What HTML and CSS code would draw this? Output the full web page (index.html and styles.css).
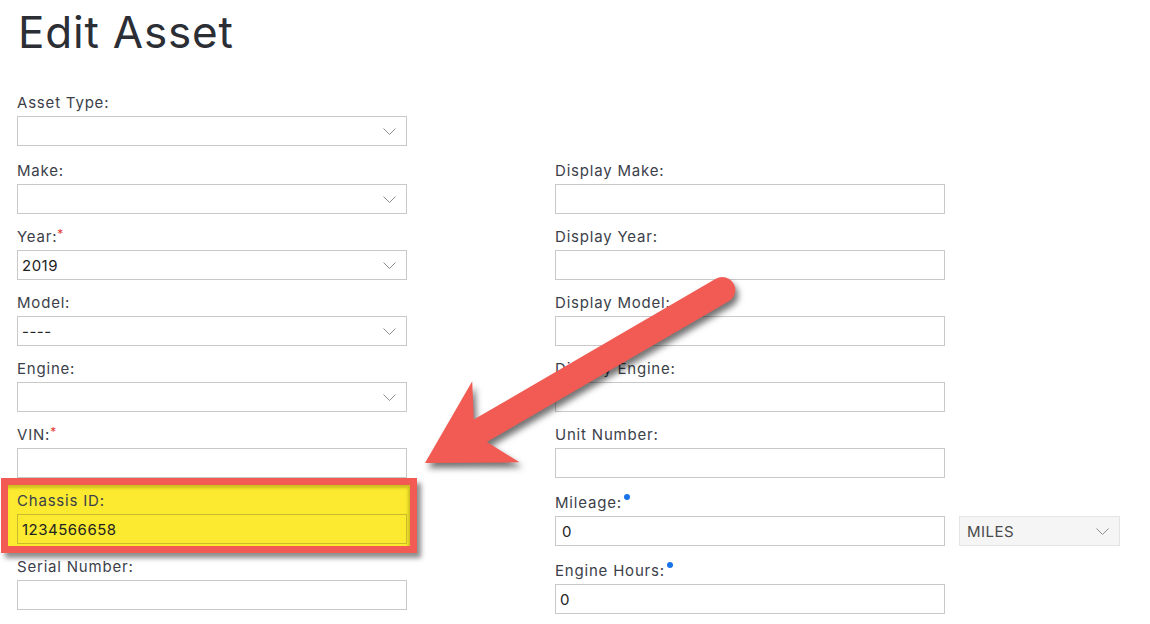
FILE: index.html
```html
<!DOCTYPE html>
<html lang="en">
<head>
    <meta charset="UTF-8">
    <meta name="viewport" content="width=device-width, initial-scale=1.0">
    <title>Edit Asset</title>
    <link rel="stylesheet" href="styles.css">
</head>
<body>
    <main class="page">
        <h1 class="title">Edit Asset</h1>

        <div class="field first">
            <label class="label">Asset Type:</label>
            <div class="select"><span></span><svg class="chev" width="13" height="7" viewBox="0 0 13 7"><polyline points="0.5,0.5 6.5,6.5 12.5,0.5"/></svg></div>
        </div>

        <div class="columns">
            <div class="col">
                <div class="field">
                    <label class="label">Make:</label>
                    <div class="select"><span></span><svg class="chev" width="13" height="7" viewBox="0 0 13 7"><polyline points="0.5,0.5 6.5,6.5 12.5,0.5"/></svg></div>
                </div>
                <div class="field">
                    <label class="label">Year:<span class="req">*</span></label>
                    <div class="select"><span>2019</span><svg class="chev" width="13" height="7" viewBox="0 0 13 7"><polyline points="0.5,0.5 6.5,6.5 12.5,0.5"/></svg></div>
                </div>
                <div class="field">
                    <label class="label">Model:</label>
                    <div class="select"><span>----</span><svg class="chev" width="13" height="7" viewBox="0 0 13 7"><polyline points="0.5,0.5 6.5,6.5 12.5,0.5"/></svg></div>
                </div>
                <div class="field">
                    <label class="label">Engine:</label>
                    <div class="select"><span></span><svg class="chev" width="13" height="7" viewBox="0 0 13 7"><polyline points="0.5,0.5 6.5,6.5 12.5,0.5"/></svg></div>
                </div>
                <div class="field">
                    <label class="label">VIN:<span class="req">*</span></label>
                    <input type="text" class="input">
                </div>
                <div class="field highlight">
                    <label class="label">Chassis ID:</label>
                    <input type="text" class="input" value="1234566658">
                </div>
                <div class="field">
                    <label class="label">Serial Number:</label>
                    <input type="text" class="input">
                </div>
            </div>

            <div class="col">
                <div class="field">
                    <label class="label">Display Make:</label>
                    <input type="text" class="input">
                </div>
                <div class="field">
                    <label class="label">Display Year:</label>
                    <input type="text" class="input">
                </div>
                <div class="field">
                    <label class="label">Display Model:</label>
                    <input type="text" class="input">
                </div>
                <div class="field">
                    <label class="label">Display Engine:</label>
                    <input type="text" class="input">
                </div>
                <div class="field">
                    <label class="label">Unit Number:</label>
                    <input type="text" class="input">
                </div>
                <div class="field">
                    <label class="label noted">Mileage:<span class="dot"></span></label>
                    <div class="unit-row">
                        <input type="text" class="input" value="0">
                        <div class="select units"><span>MILES</span><svg class="chev" width="13" height="7" viewBox="0 0 13 7"><polyline points="0.5,0.5 6.5,6.5 12.5,0.5"/></svg></div>
                    </div>
                </div>
                <div class="field">
                    <label class="label noted">Engine Hours:<span class="dot"></span></label>
                    <input type="text" class="input" value="0">
                </div>
            </div>
        </div>
    </main>

    <svg class="arrow" width="1150" height="624" viewBox="0 0 1150 624">
        <g transform="translate(425,463) rotate(-30.2)">
            <path d="M0,0 L82,-47 L64,-13 L344,-13 A13,13 0 0 1 344,13 L64,13 L82,47 Z"/>
        </g>
    </svg>
</body>
</html>
```

FILE: styles.css
```css
body {
    margin: 0;
    position: relative;
    height: 624px;
    overflow: hidden;
    background-color: #fff;
    font-family: Inter, "Noto Sans", sans-serif;
    color: #3c3f4a;
}

.page {
    padding: 10px 0 0 17px;
}

.title {
    margin: 0 0 39px 1px;
    font-size: 44px;
    line-height: 45px;
    font-weight: 400;
    letter-spacing: 0.8px;
    color: #2b2e35;
}

.field {
    display: flex;
    flex-direction: column;
    width: 390px;
}

.field.first {
    margin-bottom: 16px;
}

.label {
    font-size: 15px;
    line-height: 18px;
    letter-spacing: 0.8px;
    margin-bottom: 4px;
    white-space: nowrap;
}

.label.noted {
    padding-top: 2px;
}

.req {
    color: #e53935;
    font-size: 12px;
    line-height: 1;
    vertical-align: top;
    margin-left: 0;
}

.dot {
    display: inline-block;
    width: 6px;
    height: 6px;
    border-radius: 50%;
    background-color: #1a73e8;
    vertical-align: top;
    margin-left: 2px;
}

.input, .select {
    box-sizing: border-box;
    height: 30px;
    width: 100%;
    border: 1px solid #c9c9c9;
    background-color: #fff;
    font-family: Inter, "Noto Sans", sans-serif;
    font-size: 15px;
    letter-spacing: 0.5px;
    color: #222;
}

.input {
    padding: 0 6px 0 4px;
    margin: 0;
    outline: none;
}

.select {
    display: flex;
    align-items: center;
    justify-content: space-between;
    padding: 0 10px 0 4px;
}

.chev polyline {
    fill: none;
    stroke: #8d8d8d;
    stroke-width: 1;
}

.columns {
    display: grid;
    grid-template-columns: 390px 390px;
    column-gap: 148px;
}

.col {
    display: flex;
    flex-direction: column;
    gap: 14px;
}

.unit-row {
    display: flex;
    gap: 14px;
}

.unit-row .input {
    width: 390px;
    flex: none;
    padding-left: 6px;
}

.select.units {
    flex: none;
    width: 161px;
    background-color: #f5f5f5;
    border-color: #e4e4e4;
    color: #4a4a4a;
    padding-left: 7px;
}

.highlight {
    width: auto;
    margin: -14px -10px -9px -16px;
    padding: 7px 3px 2px 9px;
    border: 7px solid #f25b53;
    background-color: #fbea2f;
    box-shadow: 4px 5px 5px rgba(0, 0, 0, 0.45), inset -2px 3px 3px rgba(120, 110, 0, 0.35);
}

.highlight .input {
    background-color: #fbea2f;
    border-color: #c9bc2c;
}

.arrow {
    position: absolute;
    left: 0;
    top: 0;
    pointer-events: none;
    filter: drop-shadow(3px 5px 3px rgba(0, 0, 0, 0.55));
}

.arrow path {
    fill: #f25b53;
}
```
